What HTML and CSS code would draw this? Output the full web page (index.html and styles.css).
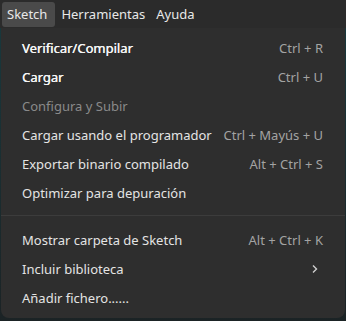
FILE: index.html
```html
<!DOCTYPE html>
<html lang="es">

<head>
  <meta charset="UTF-8">
  <title>Sketch</title>
  <link rel="stylesheet" href="styles.css">
</head>

<body>
  <div class="menubar">
    <div class="menubar-item active">Sketch</div>
    <div class="menubar-item">Herramientas</div>
    <div class="menubar-item">Ayuda</div>
  </div>

  <div class="backdrop">
    <div class="menu">
      <div class="menu-item strong"><span>Verificar/Compilar</span><span class="shortcut">Ctrl + R</span></div>
      <div class="menu-item strong"><span>Cargar</span><span class="shortcut">Ctrl + U</span></div>
      <div class="menu-item disabled"><span>Configura y Subir</span></div>
      <div class="menu-item"><span>Cargar usando el programador</span><span class="shortcut">Ctrl + Mayús + U</span></div>
      <div class="menu-item"><span>Exportar binario compilado</span><span class="shortcut">Alt + Ctrl + S</span></div>
      <div class="menu-item"><span>Optimizar para depuración</span></div>
      <div class="separator"></div>
      <div class="menu-item"><span>Mostrar carpeta de Sketch</span><span class="shortcut">Alt + Ctrl + K</span></div>
      <div class="menu-item"><span>Incluir biblioteca</span>
        <svg class="arrow" width="8" height="10" viewBox="0 0 8 10"><path d="M2 1.5 L5.5 5 L2 8.5" fill="none" stroke="#cfcfcf" stroke-width="1.4"/></svg>
      </div>
      <div class="menu-item"><span>Añadir fichero......</span></div>
    </div>
  </div>
</body>

</html>
```

FILE: styles.css
```css
html,
body {
  margin: 0;
  background: #1d2a2c;
}

body {
  width: 346px;
  height: 321px;
  overflow: hidden;
  font-family: "Noto Sans", "DejaVu Sans", sans-serif;
  font-size: 13px;
  color: #e6e6e6;
}

.menubar {
  display: flex;
  height: 28px;
  padding: 2px 0 0 2px;
  box-sizing: border-box;
  background: #2b2b2b;
}

.menubar-item {
  height: 25px;
  line-height: 24px;
  padding: 0 6px 0 5px;
  color: #e8e8e8;
  border-radius: 3px;
}

.menubar-item.active {
  background: #4a4a4a;
  padding-right: 8px;
  margin-right: 1px;
}

.backdrop {
  height: 293px;
  background: linear-gradient(#19383c, #1b2325);
  padding-left: 1px;
  padding-right: 1px;
}

.menu {
  height: 290px;
  background: #2e2e2e;
  border-radius: 0 0 8px 8px;
  padding-top: 5px;
  box-sizing: border-box;
}

.menu-item {
  display: flex;
  align-items: center;
  justify-content: space-between;
  height: 29px;
  padding: 0 22px 0 21px;
  color: #e4e4e4;
}

.menu-item.strong {
  color: #f6f6f6;
  text-shadow: 0.3px 0 0 #f6f6f6;
}

.menu-item.disabled {
  color: #8a8a8a;
}

.shortcut {
  color: #a3a3a3;
  text-shadow: none;
}

.arrow {
  margin-right: 4px;
}

.separator {
  height: 1px;
  background: #3c3c3c;
  margin: 8px 0 9px 0;
}
```
